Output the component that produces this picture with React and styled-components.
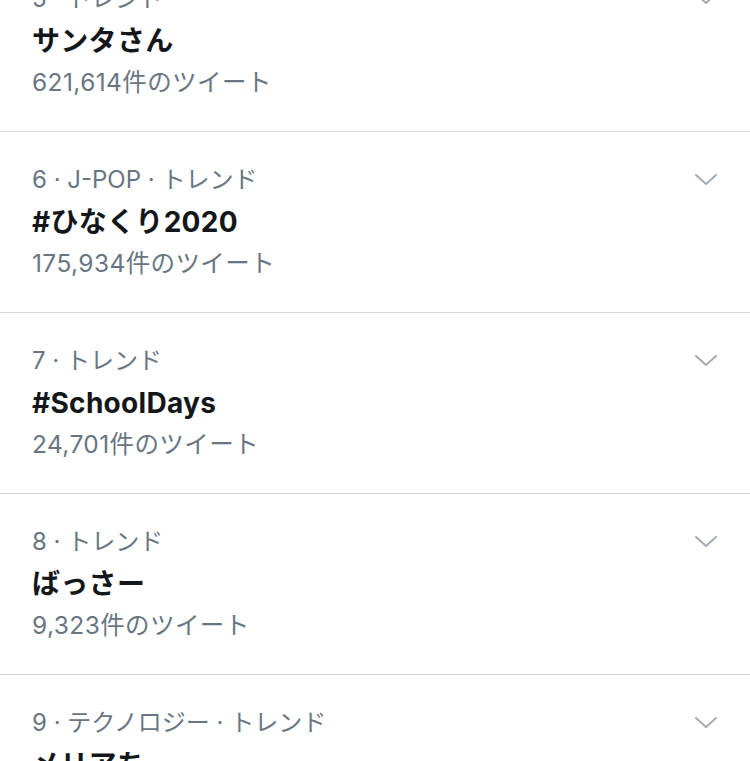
import styled, { createGlobalStyle } from "styled-components";

const GlobalStyle = createGlobalStyle`
  html, body {
    margin: 0;
    padding: 0;
    background: #ffffff;
    overflow: hidden;
  }
  body {
    font-family: Inter, "Noto Sans CJK JP", sans-serif;
    -webkit-font-smoothing: antialiased;
  }
`;

const List = styled.div`
  width: 750px;
  height: 761px;
  overflow: hidden;
`;

const Inner = styled.div`
  margin-top: -49px;
`;

const Row = styled.div`
  display: flex;
  justify-content: space-between;
  align-items: flex-start;
  height: 181px;
  padding: 27px 32px 0 32px;
  box-sizing: border-box;
  border-bottom: 1px solid #d6d9dc;
`;

const Info = styled.div`
  display: flex;
  flex-direction: column;
`;

const Meta = styled.div`
  font-size: 24px;
  line-height: 41px;
  color: #687582;
  white-space: nowrap;
`;

const Title = styled.div`
  margin-top: 2px;
  font-size: 28px;
  line-height: 41px;
  font-weight: 700;
  letter-spacing: 0.3px;
  color: #14171a;
  white-space: nowrap;
`;

const Count = styled.div`
  font-size: 24.5px;
  line-height: 41px;
  letter-spacing: 0.4px;
  color: #687582;
  white-space: nowrap;
`;

const Chevron = styled.svg`
  width: 24px;
  height: 14px;
  margin-top: 14px;
  flex-shrink: 0;
`;

const trends = [
  { meta: "5 · トレンド", title: "サンタさん", count: "621,614件のツイート" },
  { meta: "6 · J-POP · トレンド", title: "#ひなくり2020", count: "175,934件のツイート" },
  { meta: "7 · トレンド", title: "#SchoolDays", count: "24,701件のツイート" },
  { meta: "8 · トレンド", title: "ばっさー", count: "9,323件のツイート" },
  { meta: "9 · テクノロジー · トレンド", title: "メリアち", count: "" },
];

const Trend = ({ meta, title, count }) => (
  <Row>
    <Info>
      <Meta>{meta}</Meta>
      <Title>{title}</Title>
      <Count>{count}</Count>
    </Info>
    <Chevron viewBox="0 0 24 14">
      <polyline
        points="2,2 12,11 22,2"
        fill="none"
        stroke="#a3acb5"
        strokeWidth="2"
        strokeLinecap="round"
        strokeLinejoin="round"
      />
    </Chevron>
  </Row>
);

const App = () => {
  return (
    <>
      <GlobalStyle />
      <List>
        <Inner>
          {trends.map((t) => (
            <Trend key={t.meta} {...t} />
          ))}
        </Inner>
      </List>
    </>
  );
};

export default App;
